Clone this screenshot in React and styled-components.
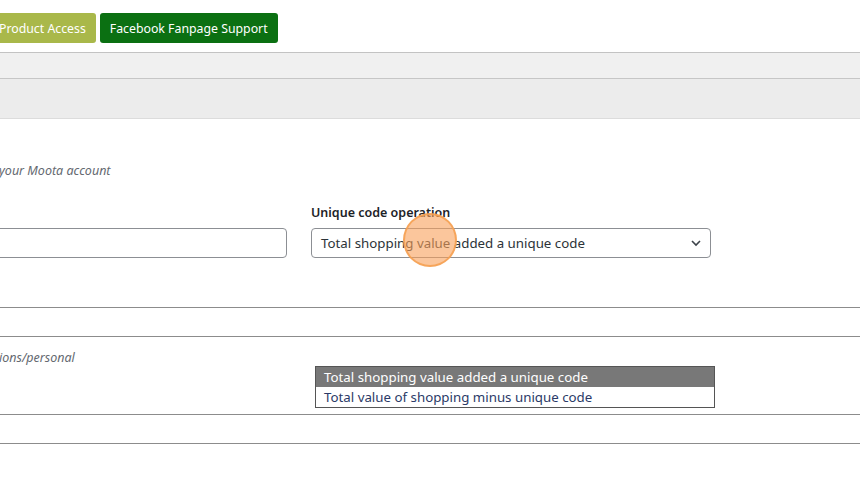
import React from "react";
import styled, { createGlobalStyle } from "styled-components";

const GlobalStyle = createGlobalStyle`
  html, body {
    margin: 0;
    padding: 0;
    background: #fff;
    overflow: hidden;
  }
  body {
    font-family: "Noto Sans", "Open Sans", sans-serif;
    color: #1d2327;
  }
`;

const options = [
  "Total shopping value added a unique code",
  "Total value of shopping minus unique code",
];

const App = () => {
  return (
    <Page>
      <GlobalStyle />
      <TabRow>
        <TabButton $bg="#a9b84a">Product Access</TabButton>
        <TabButton $bg="#0b7012">Facebook Fanpage Support</TabButton>
      </TabRow>
      <Bars>
        <Bar $h={25} $bg="#f0f0f0" />
        <Bar $h={39} $bg="#ececec" $line="#dcdcdc" />
      </Bars>
      <Section>
        <Hint>your Moota account</Hint>
        <Fields>
          <Field>
            <Label>&nbsp;</Label>
            <TextInput />
          </Field>
          <Field>
            <Label>Unique code operation</Label>
            <SelectWrap>
              <SelectBox>
                <span>{options[0]}</span>
                <svg width="12" height="12" viewBox="0 0 12 12">
                  <path
                    d="M2 4l4 4 4-4"
                    fill="none"
                    stroke="#3c434a"
                    strokeWidth="1.6"
                  />
                </svg>
              </SelectBox>
              <Cursor />
              <OptionList>
                {options.map((o, i) => (
                  <OptionItem key={i} $active={i === 0}>
                    {o}
                  </OptionItem>
                ))}
              </OptionList>
            </SelectWrap>
          </Field>
        </Fields>
      </Section>
      <Rule $gap={49} />
      <Rule $gap={28} />
      <Hint $top={12}>ions/personal</Hint>
      <Rule $gap={47} />
      <Rule $gap={28} />
    </Page>
  );
};

const Page = styled.div`
  width: 860px;
  height: 481px;
  overflow: hidden;
  padding-top: 13px;
  box-sizing: border-box;
`;

const TabRow = styled.div`
  display: flex;
  gap: 4px;
  margin-left: -11px;
`;

const TabButton = styled.button`
  background: ${(p) => p.$bg};
  color: #fff;
  border: none;
  border-radius: 3px;
  height: 30px;
  padding: 0 10px;
  font-family: "Noto Sans", "Open Sans", sans-serif;
  font-size: 12.3px;
  white-space: nowrap;
`;

const Bars = styled.div`
  margin-top: 9px;
  border-top: 1px solid #c3c3c3;
`;

const Bar = styled.div`
  height: ${(p) => p.$h}px;
  background: ${(p) => p.$bg};
  border-bottom: 1px solid ${(p) => p.$line || "#c6c6c6"};
`;

const Section = styled.div`
  padding-top: 43px;
`;

const Hint = styled.p`
  margin: ${(p) => p.$top || 0}px 0 0 -1px;
  font-size: 12.5px;
  font-style: italic;
  color: #646970;
  line-height: 18px;
  white-space: nowrap;
`;

const Fields = styled.div`
  display: grid;
  grid-template-columns: 400px 400px;
  column-gap: 24px;
  margin: 24px 0 0 -113px;
`;

const Field = styled.div`
  display: flex;
  flex-direction: column;
  gap: 6px;
`;

const Label = styled.label`
  font-size: 12.5px;
  font-weight: 600;
  color: #1d2327;
  line-height: 18px;
`;

const TextInput = styled.div`
  height: 30px;
  box-sizing: border-box;
  border: 1px solid #8c8f94;
  border-radius: 4px;
  background: #fff;
`;

const SelectWrap = styled.div`
  position: relative;
`;

const SelectBox = styled.div`
  height: 30px;
  box-sizing: border-box;
  border: 1px solid #8c8f94;
  border-radius: 4px;
  display: flex;
  align-items: center;
  justify-content: space-between;
  padding: 0 8px 0 9px;
  font-size: 13.3px;
  color: #2c3338;
  white-space: nowrap;
`;

const Cursor = styled.div`
  position: absolute;
  left: 92px;
  top: -15px;
  width: 50px;
  height: 50px;
  border-radius: 50%;
  background: rgba(248, 160, 90, 0.6);
  border: 2px solid rgba(246, 160, 80, 0.85);
`;

const OptionList = styled.div`
  position: absolute;
  left: 4px;
  top: 138px;
  width: 400px;
  box-sizing: border-box;
  border: 1px solid #555;
  background: #fff;
`;

const OptionItem = styled.div`
  height: 20px;
  line-height: 20px;
  padding: 0 8px;
  font-size: 13.3px;
  white-space: nowrap;
  background: ${(p) => (p.$active ? "#787878" : "#fff")};
  color: ${(p) => (p.$active ? "#fff" : "#2b3a67")};
`;

const Rule = styled.hr`
  margin: ${(p) => p.$gap}px 0 0;
  border: none;
  border-top: 1px solid #8c8c8c;
  height: 0;
`;

export default App;
